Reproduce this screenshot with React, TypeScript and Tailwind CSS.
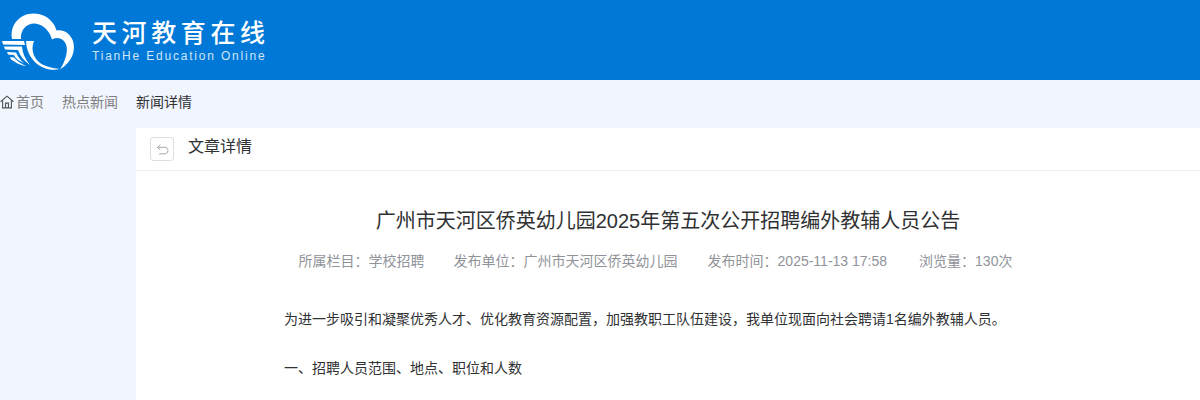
import React from "react";

const Logo = () => (
  <svg width="76" height="80" viewBox="0 0 76 80" className="shrink-0">
    <g fill="#fff">
      <path d="M12 39 C10 29 15 20 23 16 C33 11 45 14 51 21 C54 24 55.500 27 56.500 30.500 C63 29 70 33 73 41 C76 51 72 62 60 69.500 C65 62 68 52 66.500 46 C64.500 39 58 36 52 39.500 C50 32 44 24.500 35 23.500 C27 23 20 30 21 39 Z" />
      <path d="M26 41 H34 C30 50 34 62 46 66 C50 67.500 55 68.500 60 69 C45 73 27 62 26 41 Z" />
      <path d="M2 41 H24 L25 45 L3 44.500 Z" />
      <path d="M4 46.500 H22 C22.500 53 25 59 30 65 C24 61 20 56 18 50 L5 49.500 Z" />
      <path d="M7 52 L16 52.500 C18 57 20 60 24 63 C19 61 15 58 14 55 L8 54.500 Z" />
      <path d="M10 57 L14 57.500 C17 61 21 64 26 66 C21 66 15 62 11 59.500 Z" />
    </g>
  </svg>
);

export default function App() {
  const sans = "font-['Liberation_Sans','Noto_Sans_CJK_SC',sans-serif]";
  return (
    <div className={`w-[1200px] h-[400px] overflow-hidden bg-[#f0f5fe] ${sans}`}>
      <header className="h-20 bg-[#0078d7] flex items-center">
        <Logo />
        <div className="ml-4 flex flex-col text-white">
          <div className="text-[25px] leading-[30px] font-medium tracking-[4.6px] font-['Noto_Sans_CJK_SC',sans-serif] mt-[-1px]">天河教育在线</div>
          <div className="text-[12px] leading-[16px] tracking-[1.8px] text-[#cfe6fa] mt-[2px]">TianHe Education Online</div>
        </div>
      </header>

      <nav className="h-12 pb-1 flex items-center text-sm text-[#808080]">
        <svg width="14" height="14" viewBox="0 0 24 24" fill="none" stroke="#505358" strokeWidth="1.9" className="mr-[2px] shrink-0">
          <path d="M1 11.500 L12 2 L23 11.500" />
          <path d="M4.500 9.500 V22 H19.500 V9.500" />
          <path d="M9.500 22 V14 H14.500 V22" />
        </svg>
        <span>首页</span>
        <span className="ml-[18px]">热点新闻</span>
        <span className="ml-[18px] text-[#303133]">新闻详情</span>
      </nav>

      <main className="ml-[136px] h-[272px] bg-white">
        <div className="h-[43px] flex items-center border-b border-[#ebeef5] pl-[14px]">
          <div className="w-6 h-6 border border-[#dcdfe6] rounded-[3px] flex items-center justify-center">
            <svg width="13" height="13" viewBox="0 0 24 24" fill="none" stroke="#909399" strokeWidth="1.5">
              <path d="M8 3 L3 8 L8 13" />
              <path d="M3 8 H16 C20 8 22 11 22 14 C22 18 19 20 16 20 H6" />
            </svg>
          </div>
          <div className="ml-[14px] mb-1 text-base text-[#303133]">文章详情</div>
        </div>

        <h1 className="mt-[36px] text-xl leading-7 text-center text-[#303133] font-normal whitespace-nowrap">广州市天河区侨英幼儿园2025年第五次公开招聘编外教辅人员公告</h1>
        <div className="mt-[16px] pr-[25px] flex justify-center text-sm leading-5 text-[#909399] whitespace-nowrap">
          <span>所属栏目：学校招聘</span>
          <span className="ml-[29px]">发布单位：广州市天河区侨英幼儿园</span>
          <span className="ml-[30px]">发布时间：2025-11-13 17:58</span>
          <span className="ml-[32px]">浏览量：130次</span>
        </div>
        <div className="pl-[148px]">
          <p className="mt-[36px] text-sm leading-6 text-[#303133] whitespace-nowrap">为进一步吸引和凝聚优秀人才、优化教育资源配置，加强教职工队伍建设，我单位现面向社会聘请1名编外教辅人员。</p>
          <p className="mt-[25px] text-sm leading-6 text-[#303133] whitespace-nowrap">一、招聘人员范围、地点、职位和人数</p>
        </div>
      </main>
    </div>
  );
}
